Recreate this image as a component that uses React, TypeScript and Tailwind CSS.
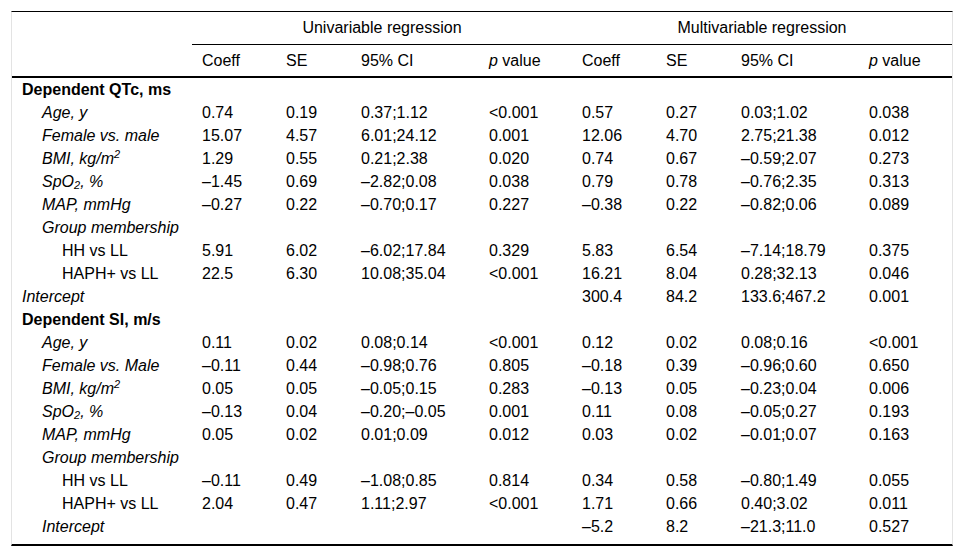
import React from 'react';

type Vals = [string, string, string, string];

interface Row {
  kind: 'head' | 'item' | 'sub' | 'flat';
  label: React.ReactNode;
  u?: Vals;
  m?: Vals;
}

const cols = 'grid grid-cols-[180px_84px_75px_128px_93px_84px_75px_128px_93px]';

const kgm2 = (
  <>
    BMI, kg/m<sup className="text-[11px]">2</sup>
  </>
);

const spo2 = (
  <>
    SpO<sub className="text-[11px]">2</sub>, %
  </>
);

const rows: Row[] = [
  { kind: 'head', label: 'Dependent QTc, ms' },
  { kind: 'item', label: 'Age, y', u: ['0.74', '0.19', '0.37;1.12', '<0.001'], m: ['0.57', '0.27', '0.03;1.02', '0.038'] },
  { kind: 'item', label: 'Female vs. male', u: ['15.07', '4.57', '6.01;24.12', '0.001'], m: ['12.06', '4.70', '2.75;21.38', '0.012'] },
  { kind: 'item', label: kgm2, u: ['1.29', '0.55', '0.21;2.38', '0.020'], m: ['0.74', '0.67', '–0.59;2.07', '0.273'] },
  { kind: 'item', label: spo2, u: ['–1.45', '0.69', '–2.82;0.08', '0.038'], m: ['0.79', '0.78', '–0.76;2.35', '0.313'] },
  { kind: 'item', label: 'MAP, mmHg', u: ['–0.27', '0.22', '–0.70;0.17', '0.227'], m: ['–0.38', '0.22', '–0.82;0.06', '0.089'] },
  { kind: 'item', label: 'Group membership' },
  { kind: 'sub', label: 'HH vs LL', u: ['5.91', '6.02', '–6.02;17.84', '0.329'], m: ['5.83', '6.54', '–7.14;18.79', '0.375'] },
  { kind: 'sub', label: 'HAPH+ vs LL', u: ['22.5', '6.30', '10.08;35.04', '<0.001'], m: ['16.21', '8.04', '0.28;32.13', '0.046'] },
  { kind: 'flat', label: 'Intercept', m: ['300.4', '84.2', '133.6;467.2', '0.001'] },
  { kind: 'head', label: 'Dependent SI, m/s' },
  { kind: 'item', label: 'Age, y', u: ['0.11', '0.02', '0.08;0.14', '<0.001'], m: ['0.12', '0.02', '0.08;0.16', '<0.001'] },
  { kind: 'item', label: 'Female vs. Male', u: ['–0.11', '0.44', '–0.98;0.76', '0.805'], m: ['–0.18', '0.39', '–0.96;0.60', '0.650'] },
  { kind: 'item', label: kgm2, u: ['0.05', '0.05', '–0.05;0.15', '0.283'], m: ['–0.13', '0.05', '–0.23;0.04', '0.006'] },
  { kind: 'item', label: spo2, u: ['–0.13', '0.04', '–0.20;–0.05', '0.001'], m: ['0.11', '0.08', '–0.05;0.27', '0.193'] },
  { kind: 'item', label: 'MAP, mmHg', u: ['0.05', '0.02', '0.01;0.09', '0.012'], m: ['0.03', '0.02', '–0.01;0.07', '0.163'] },
  { kind: 'item', label: 'Group membership' },
  { kind: 'sub', label: 'HH vs LL', u: ['–0.11', '0.49', '–1.08;0.85', '0.814'], m: ['0.34', '0.58', '–0.80;1.49', '0.055'] },
  { kind: 'sub', label: 'HAPH+ vs LL', u: ['2.04', '0.47', '1.11;2.97', '<0.001'], m: ['1.71', '0.66', '0.40;3.02', '0.011'] },
  { kind: 'item', label: 'Intercept', m: ['–5.2', '8.2', '–21.3;11.0', '0.527'] },
];

function labelClass(kind: Row['kind']) {
  if (kind === 'head') return 'pl-[10px] font-bold';
  if (kind === 'flat') return 'pl-[10px] italic';
  if (kind === 'sub') return 'pl-[50px]';
  return 'pl-[30px] italic';
}

const PValue = () => (
  <span>
    <i>p</i> value
  </span>
);

export default function App() {
  const empty: Vals = ['', '', '', ''];

  return (
    <div className="min-h-screen bg-white pt-[11px] pl-[11px] font-['Liberation_Sans',Arial,sans-serif] text-[16px] leading-[20px] text-black">
      <div className="w-[942px] border-t border-black border-x border-x-[#e3e3e3] border-b-2 border-b-black pb-[6px]">
        {/* group header */}
        <div className={cols}>
          <div className="h-[33px]" />
          <div className="col-span-4 h-[33px] border-b border-black flex items-center justify-center">
            Univariable regression
          </div>
          <div className="col-span-4 h-[33px] border-b border-black flex items-center justify-center">
            Multivariable regression
          </div>
        </div>

        {/* column header */}
        <div className={`${cols} h-[33px] border-b-2 border-black items-center`}>
          <div />
          {[0, 1].map((g) => (
            <React.Fragment key={g}>
              <div className="pl-[10px]">Coeff</div>
              <div className="pl-[10px]">SE</div>
              <div className="pl-[10px]">95% CI</div>
              <div className="pl-[10px]">
                <PValue />
              </div>
            </React.Fragment>
          ))}
        </div>

        {rows.map((row, i) => (
          <div key={i} className={`${cols} h-[23px] items-center whitespace-nowrap`}>
            <div className={labelClass(row.kind)}>{row.label}</div>
            {[...(row.u ?? empty), ...(row.m ?? empty)].map((v, j) => (
              <div key={j} className="pl-[10px]">
                {v}
              </div>
            ))}
          </div>
        ))}
      </div>
    </div>
  );
}
